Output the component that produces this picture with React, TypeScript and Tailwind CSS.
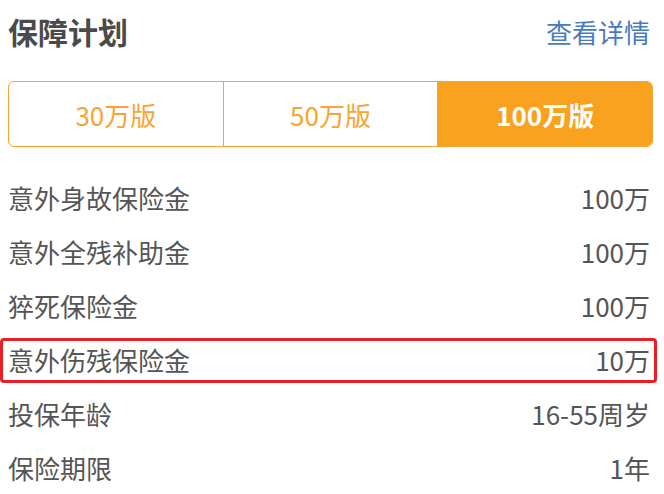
const plans = ['30万版', '50万版', '100万版']

const rows = [
  { label: '意外身故保险金', value: '100万' },
  { label: '意外全残补助金', value: '100万' },
  { label: '猝死保险金', value: '100万' },
  { label: '意外伤残保险金', value: '10万', marked: true },
  { label: '投保年龄', value: '16-55周岁' },
  { label: '保险期限', value: '1年' },
]

const App = () => {
  return (
    <div
      className="h-[494px] w-[664px] overflow-hidden bg-white pl-2 pr-[11px]"
      style={{ fontFamily: '"Noto Sans CJK SC", "Noto Sans", sans-serif' }}
    >
      <div className="flex h-[62px] items-center justify-between pr-[3px]">
        <h2 className="text-[30px] font-bold text-[#4a4a4a]">保障计划</h2>
        <a className="text-[26px] text-[#4a7cbc]">查看详情</a>
      </div>

      <div className="mt-[19px] flex h-[66px] overflow-hidden rounded-md border-[1.5px] border-[#f7a531]">
        {plans.map((p, i) => (
          <div
            key={p}
            className={
              i === 2
                ? 'flex flex-1 items-center justify-center bg-[#f9a21f] text-[26px] font-bold text-white'
                : 'flex flex-1 items-center justify-center border-r-[1.5px] border-[#f7a531] text-[26px] text-[#f6a533]'
            }
          >
            {p}
          </div>
        ))}
      </div>

      <div className="mt-[23px]">
        {rows.map((r) => (
          <div
            key={r.label}
            className="relative flex h-[54px] items-center justify-between pr-[3px] text-[26px] text-[#555]"
          >
            {r.marked && (
              <span className="absolute -left-2 -right-[4px] top-[6px] bottom-[3px] rounded-sm border-[3px] border-[#ea1f26]" />
            )}
            <span>{r.label}</span>
            <span>{r.value}</span>
          </div>
        ))}
      </div>
    </div>
  )
}

export default App
